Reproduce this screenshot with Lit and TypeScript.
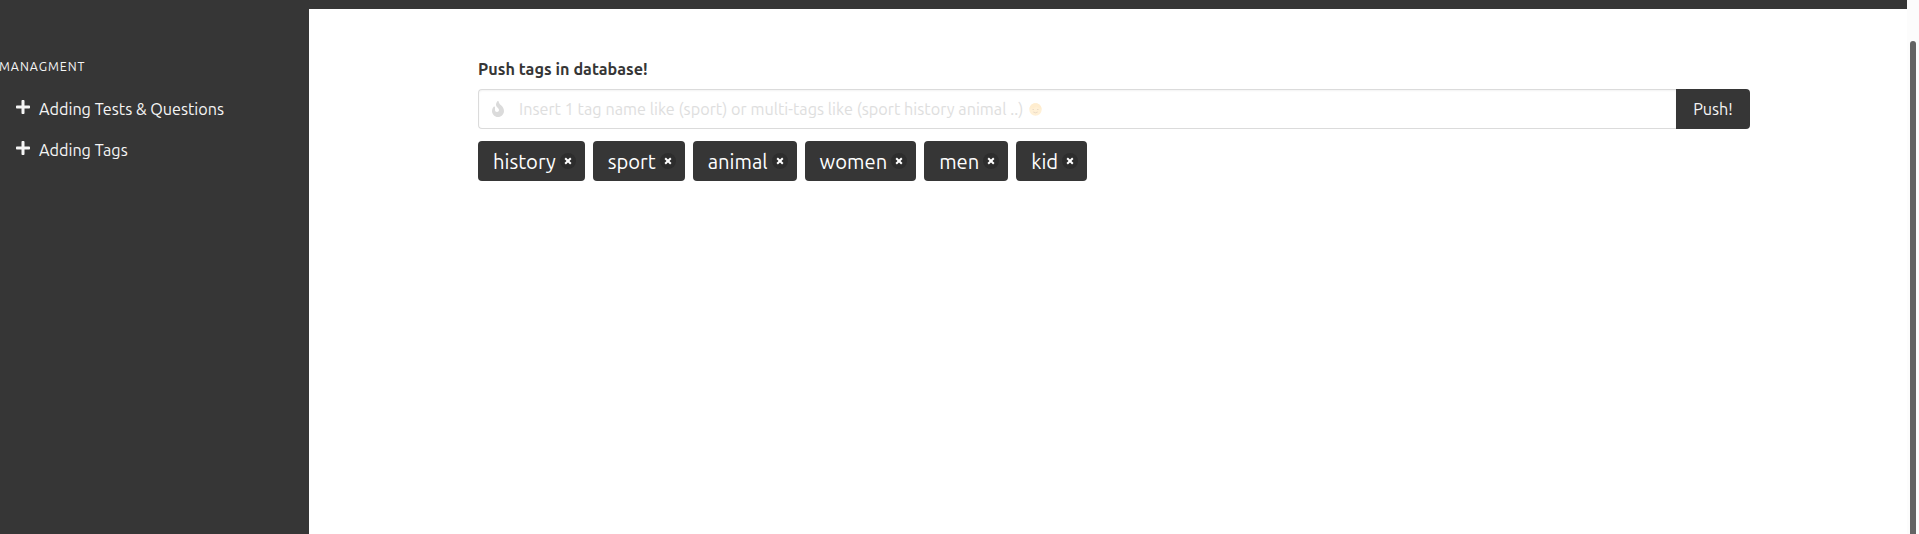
import { LitElement, html, css, svg } from 'lit';
import { customElement } from 'lit/decorators.js';

const plus = svg`<path d="M416 208H272V64c0-17.67-14.33-32-32-32h-32c-17.67 0-32 14.33-32 32v144H32c-17.67 0-32 14.33-32 32v32c0 17.67 14.33 32 32 32h144v144c0 17.67 14.33 32 32 32h32c17.67 0 32-14.33 32-32V304h144c17.67 0 32-14.33 32-32v-32c0-17.67-14.33-32-32-32z"/>`;
const fire = svg`<path d="M216 23.86c0-23.8-30.65-32.77-44.15-13.04C48 191.85 224 200 224 288c0 35.63-29.11 64.46-64.85 63.99-35.17-.45-63.15-29.77-63.15-64.94v-85.51c0-21.7-26.47-32.23-41.43-16.5C27.8 213.16 0 261.33 0 320c0 105.87 86.13 192 192 192s192-86.13 192-192c0-170.29-168-193-168-296.14z"/>`;

@customElement('app-root')
class AppRoot extends LitElement {
  private menu = ['Adding Tests & Questions', 'Adding Tags'];
  private tags = ['history', 'sport', 'animal', 'women', 'men', 'kid'];

  static styles = css`
    :host {
      display: flex;
      height: 534px;
      overflow: hidden;
      background: #fff;
      color: #363636;
      font: 16.2px/24px Ubuntu, "Noto Sans", sans-serif;
    }
    * { box-sizing: border-box; }
    .page { flex: 1; display: flex; flex-direction: column; }
    .navbar { height: 9px; background: #363636; }
    .body { flex: 1; display: flex; }
    aside { width: 309px; background: #363636; color: #f5f5f5; padding-top: 48px; }
    .heading { font-size: 12.5px; letter-spacing: .95px; line-height: 18px; height: 18px; margin-left: -1px; }
    .menu { list-style: none; margin: 13px 0 0; padding: 0; }
    .item { display: flex; height: 41px; padding: 9px 0 0 16px; white-space: nowrap; }
    .plus { width: 14px; height: 16px; margin: 2px 9px 0 0; fill: #f5f5f5; }
    main { flex: 1; padding: 48px 157px 0 169px; }
    .label { font-weight: 700; height: 24px; margin-bottom: 8px; letter-spacing: .03px; }
    .field { display: flex; height: 40px; margin-bottom: 12px; }
    .input {
      flex: 1; display: flex; align-items: center;
      border: 1px solid #dbdbdb; border-right: 0; border-radius: 4px 0 0 4px;
      box-shadow: inset 0 1px 2px rgba(10, 10, 10, .05);
      padding-left: 13px; color: #dedede; letter-spacing: .025px;
    }
    .fire { width: 12px; height: 16px; fill: #dbdbdb; margin-right: 15px; }
    .face { width: 13px; height: 13px; margin: 1px 0 0 6px; }
    .button {
      width: 74px; background: #363636; color: #f5f5f5;
      border: 0; border-radius: 0 4px 4px 0; padding: 0; font: inherit;
    }
    .tags { display: flex; gap: 8px; }
    .tag {
      display: flex; align-items: center; height: 40px; padding: 0 9px 0 15px;
      background: #363636; color: #fff; border-radius: 4px;
      font-size: 20.2px; line-height: 40px;
    }
    .name { padding-top: 1px; }
    .delete { width: 16px; height: 16px; margin-left: 4px; }
    .gutter { width: 12px; background: #fcfcfc; padding: 41px 3px 0; }
    .thumb { height: 520px; border-radius: 3px; background: #636363; }
  `;

  render() {
    return html`
      <div class="page">
        <nav class="navbar"></nav>
        <div class="body">
          <aside>
            <div class="heading">MANAGMENT</div>
            <ul class="menu">
              ${this.menu.map((label) => html`
                <li class="item"><svg class="plus" viewBox="0 0 448 512">${plus}</svg><span>${label}</span></li>`)}
            </ul>
          </aside>
          <main>
            <div class="label">Push tags in database!</div>
            <div class="field">
              <div class="input">
                <svg class="fire" viewBox="0 0 384 512">${fire}</svg>
                <span>Insert 1 tag name like (sport) or multi-tags like (sport history animal ..)</span>
                <svg class="face" viewBox="0 0 13 13">
                  <circle cx="6.5" cy="6.5" r="6.2" fill="#fff0d6"/>
                  <path d="M.5 6C1 2 3.500 .3 6.500 .3S12 2 12.500 6C10 5.500 9 4.500 8 3.500C6 5 3 5.500 .5 6z" fill="#ffedcf"/>
                  <path d="M3.500 6.500h1.500M8 6.500h1.500M4.300 9q2.200 1.600 4.400 0" fill="none" stroke="#e9d7c3" stroke-width=".9"/>
                </svg>
              </div>
              <button class="button">Push!</button>
            </div>
            <div class="tags">
              ${this.tags.map((name) => html`
                <span class="tag">
                  <span class="name">${name}</span>
                  <svg class="delete" viewBox="0 0 16 16">
                    <circle cx="8" cy="8" r="8" fill="#2d2d2d"/>
                    <path d="M5.200 5.200l5.600 5.600M10.800 5.200l-5.600 5.600" stroke="#fff" stroke-width="2"/>
                  </svg>
                </span>`)}
            </div>
          </main>
        </div>
      </div>
      <div class="gutter"><div class="thumb"></div></div>
    `;
  }
}
